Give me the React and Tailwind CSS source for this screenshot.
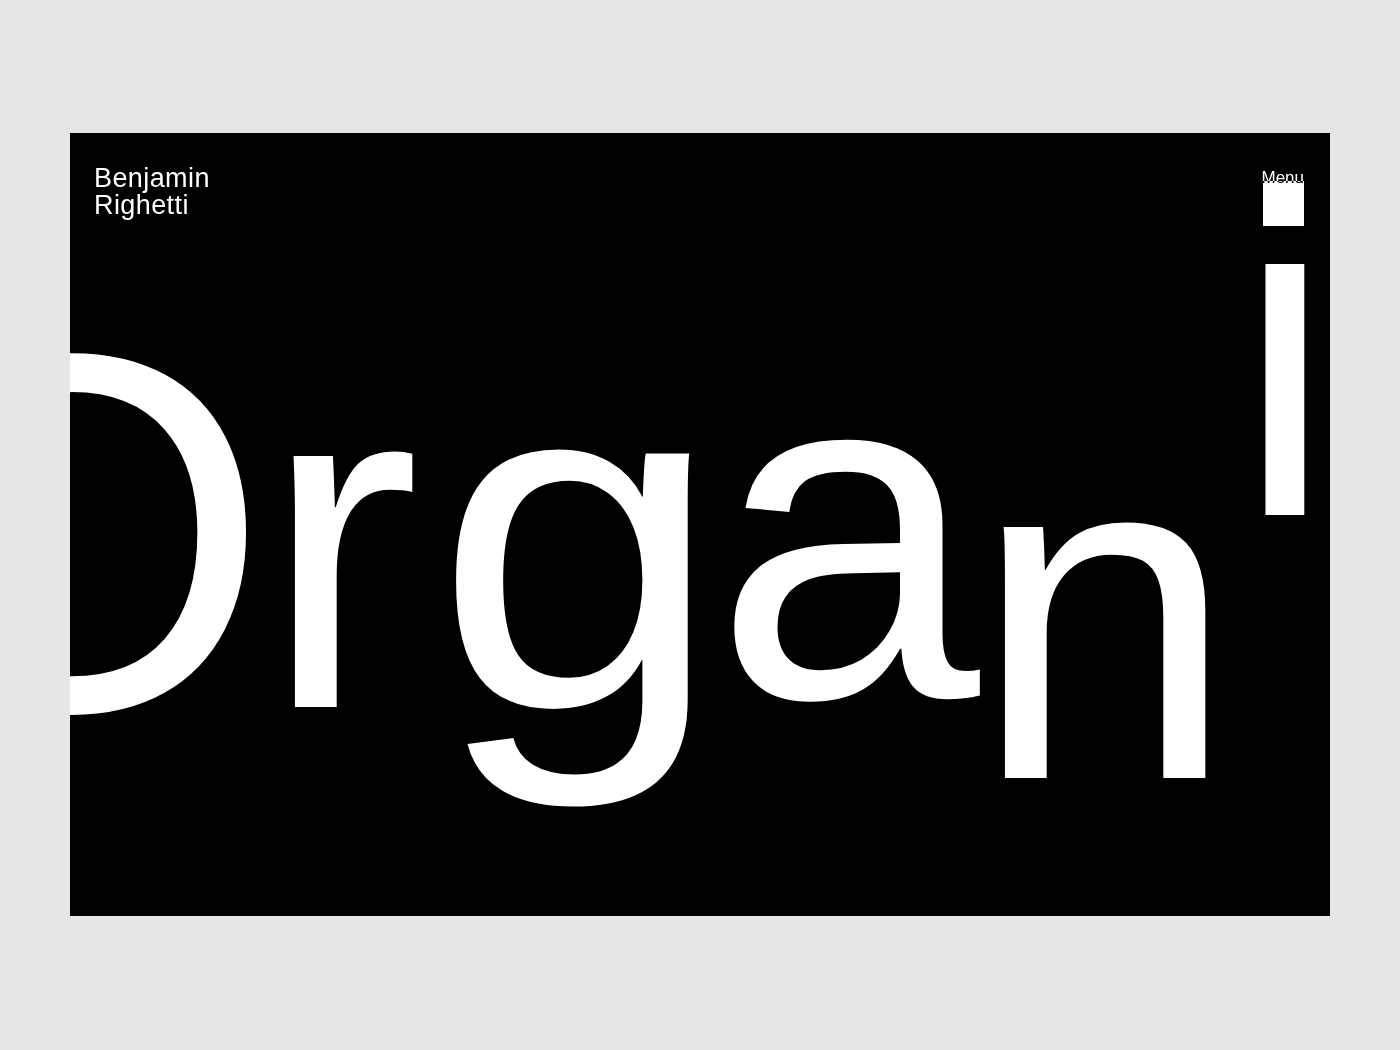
import React from 'react'

const FONT = { fontFamily: '"Liberation Sans", Arial, sans-serif' }

// giant letters, each one on its own baseline and size
const LETTERS = [
  { ch: 'O', className: 'left-[-197px] top-[144px] text-[511px]' },
  { ch: 'r', className: 'left-[192px] top-[172px] text-[475px]' },
  { ch: 'g', className: 'left-[375px] top-[168px] text-[480px] scale-x-[1.08]' },
  { ch: 'a', className: 'left-[644px] top-[159px] text-[478px]' },
  { ch: 'n', className: 'left-[902px] top-[243px] text-[475px]' },
  { ch: '\u0131', className: 'left-[1149px] top-[-20px] text-[475px] scale-x-[0.93]' }
]

function Header() {
  return (
    <div className="relative z-10 flex items-start justify-between pl-[24px] pr-[26px] pt-[32px]">
      <p className="text-[27px] leading-[27px] text-white tracking-[0.015em]">
        Benjamin
        <br />
        Righetti
      </p>
      <button type="button" className="flex flex-col items-end pt-[4px]">
        <span className="relative z-10 text-[17px] leading-[17px] text-white mix-blend-difference">Menu</span>
        <span className="-mt-[5px] block h-[45px] w-[41px] bg-white" />
      </button>
    </div>
  )
}

export default function App() {
  return (
    <div className="min-h-[1050px] w-full bg-[#e6e6e6] px-[70px] pt-[133px]" style={FONT}>
      <div className="relative h-[783px] w-full overflow-hidden bg-black">
        {LETTERS.map((l, i) => (
          <span
            key={i}
            className={`absolute select-none whitespace-nowrap leading-none text-white ${l.className}`}
          >
            {l.ch}
          </span>
        ))}
        <Header />
      </div>
    </div>
  )
}
